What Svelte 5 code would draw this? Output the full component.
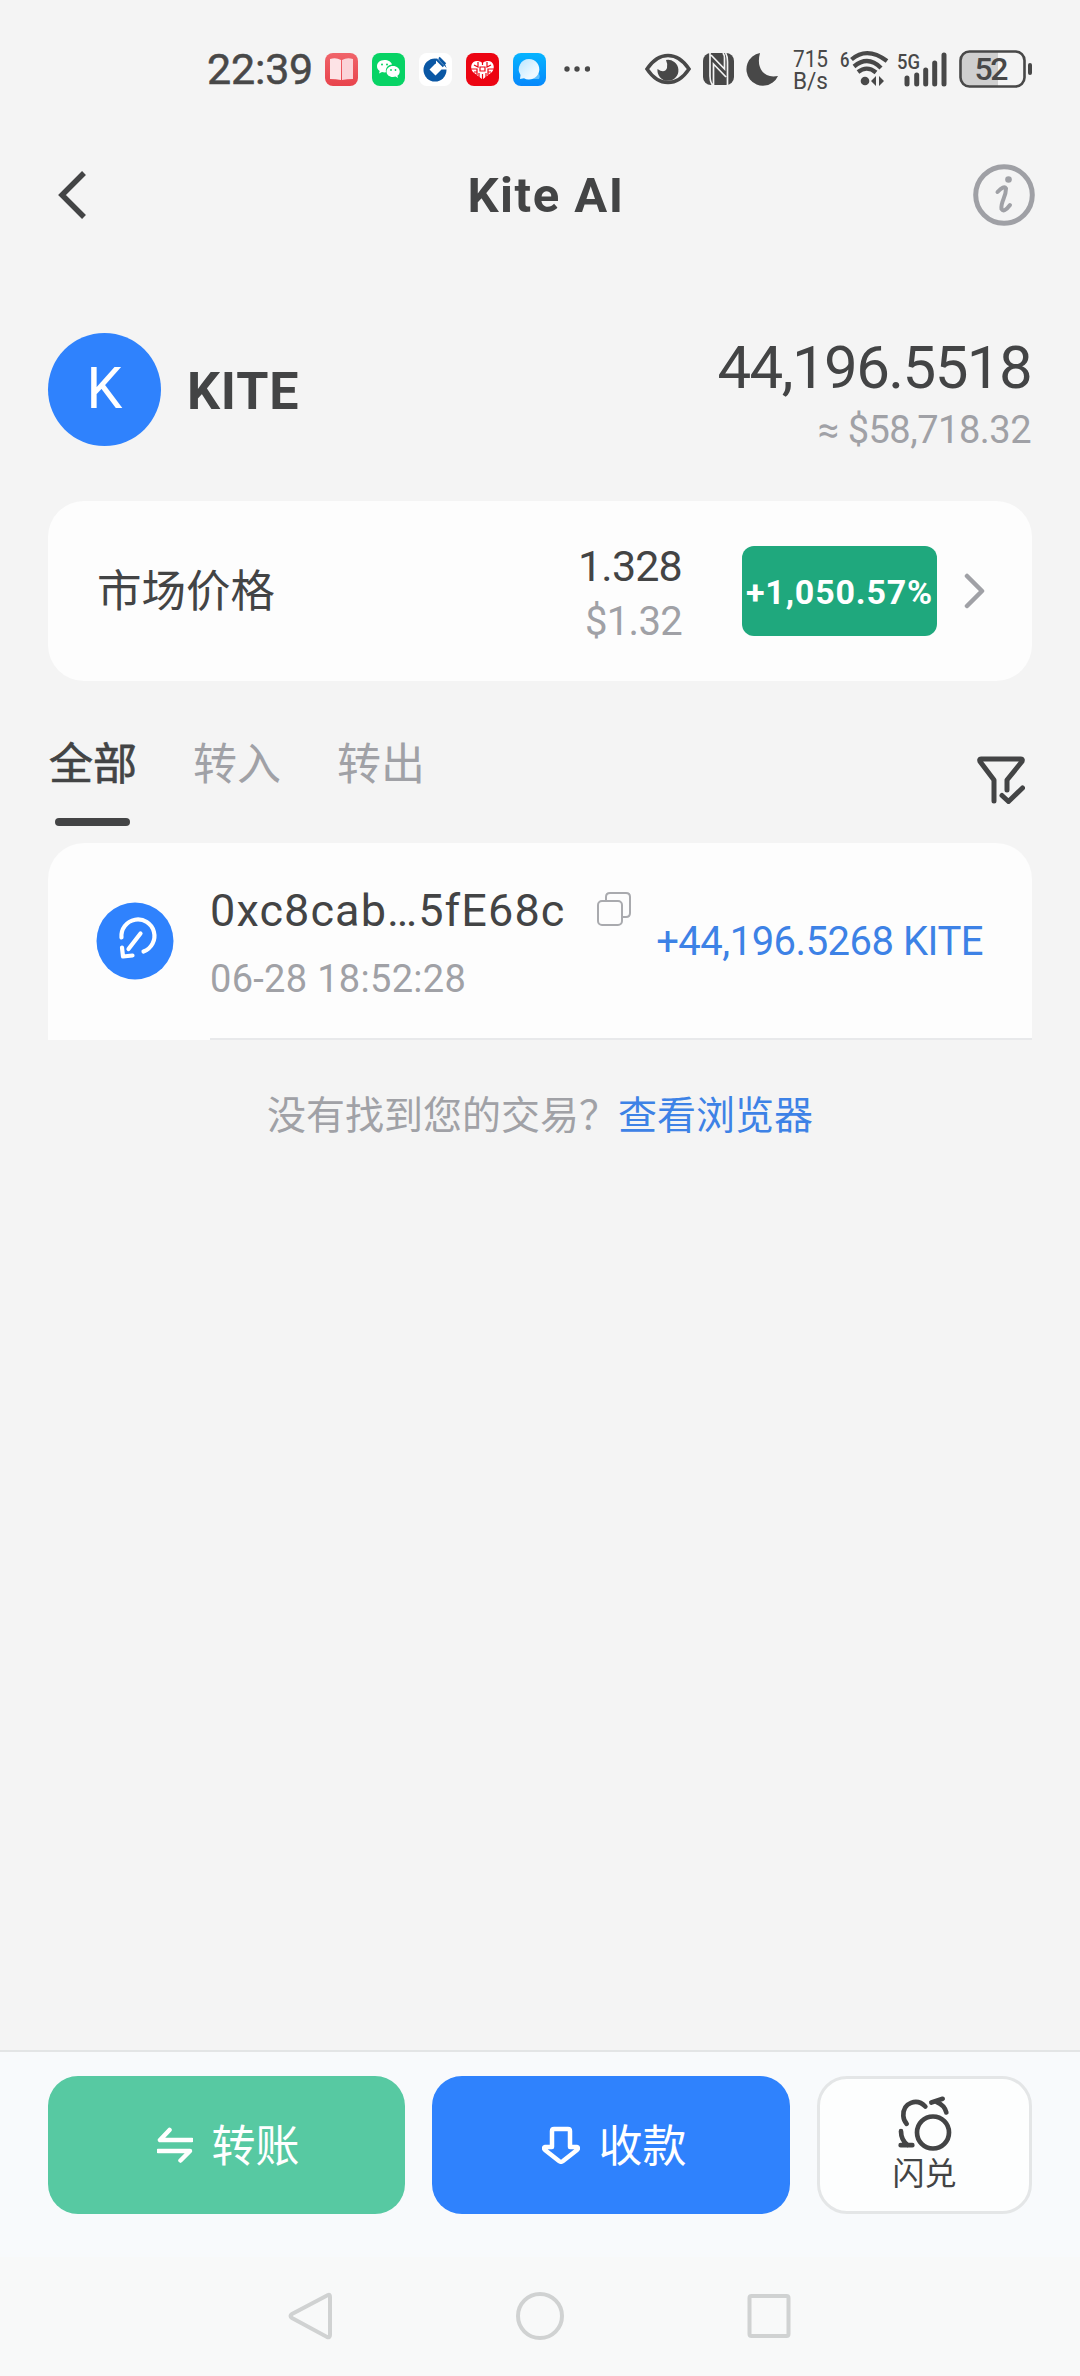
<script lang="ts">
    const token = {
        name: 'Kite AI',
        symbol: 'KITE',
        balance: '44,196.5518',
        value: '≈ $58,718.32',
        price: '1.328',
        priceUsd: '$1.32',
        change: '+1,050.57%',
    }

    const tabs = ['全部', '转入', '转出']
    let active = $state(0)

    const transactions = [
        { address: '0xc8cab…5fE68c', time: '06-28 18:52:28', amount: '+44,196.5268 KITE' },
    ]
</script>

<div class="page">
    <div class="status">
        <span class="clock">22:39</span>
        <div class="apps">
            <svg viewBox="0 0 33 33">
                <defs>
                    <linearGradient id="red" x2="0" y2="1">
                        <stop offset="0" stop-color="#f0646a" />
                        <stop offset="1" stop-color="#e8434c" />
                    </linearGradient>
                </defs>
                <rect width="33" height="33" rx="8" fill="url(#red)" />
                <path d="M5 6q6-2 11 1v20q-5-1-11-1z" fill="#fde3e6" />
                <path d="M28 6q-6-2-11 1v20q5-1 11-1z" fill="#fbd3d8" />
            </svg>
            <svg viewBox="0 0 33 33">
                <rect width="33" height="33" rx="8" fill="#07d365" />
                <path
                    d="M12.500 7C8 7 5 9.800 5 13.300c0 2 1 3.700 2.700 4.800L7 20.500l3-1.500q2 .6 4 .3c-1-5 3-7.800 6-7.800C19.300 8.800 16.400 7 12.500 7z"
                    fill="#fff"
                />
                <path
                    d="M21 13c-4 0-6.500 2.500-6.500 5.500S17 24 21 24q1.500 0 2.600-.4L26 25l-.6-2.200c1.500-1 2.300-2.500 2.300-4.300C27.700 15.500 25 13 21 13z"
                    fill="#fff"
                />
                <g fill="#07d365">
                    <circle cx="10" cy="11.500" r="1" />
                    <circle cx="15" cy="11.500" r="1" />
                    <circle cx="19" cy="17" r=".9" />
                    <circle cx="23.500" cy="17" r=".9" />
                </g>
            </svg>
            <svg viewBox="0 0 33 33">
                <rect width="33" height="33" rx="8" fill="#fff" />
                <circle cx="16" cy="17" r="11.500" fill="#0a57a4" />
                <path d="M16.500 10.500l6 6-6 6-6-6zM17 4l12 12.500h-7l-5-5z" fill="#fff" />
                <path d="M17 6l7.500 7.500M20 4.500l6.500 6.500" stroke="#0a57a4" stroke-width="2" />
            </svg>
            <svg viewBox="0 0 33 33">
                <rect width="33" height="33" rx="8" fill="#ec0412" />
                <path
                    d="M16.500 26.500L7 19c-4-5-1-12 5-11q3 .5 4.500 2Q18 8.500 21 8c6-1 9 6 5 11z"
                    fill="#fff"
                />
                <path
                    d="M16.500 9v3m0 9v6M8 12l4 2V9M5 16h6v6M25 12l-4 2V9M28 16h-6v6M14 14h5v4h-5zM13 20v5M20 20v5M8 19h3M22 19h3"
                    fill="none"
                    stroke="#ec0412"
                    stroke-width="1.200"
                />
            </svg>
            <svg viewBox="0 0 33 33">
                <defs>
                    <linearGradient id="blue" x2="0" y2="1">
                        <stop offset="0" stop-color="#06b4ff" />
                        <stop offset="1" stop-color="#0688fb" />
                    </linearGradient>
                    <linearGradient id="bubble" x2="1" y2="1">
                        <stop offset="0" stop-color="#b9e6ff" />
                        <stop offset=".7" stop-color="#eff9ff" />
                    </linearGradient>
                </defs>
                <rect width="33" height="33" rx="8" fill="url(#blue)" />
                <path d="M25 20a5 5 0 0 1 1 6h-6z" fill="#5fc0fc" />
                <path
                    d="M16 6A10.300 10.300 0 0 0 7.500 22L7 26l4-.7A10.300 10.300 0 1 0 16 6z"
                    fill="url(#bubble)"
                />
            </svg>
        </div>
        <svg class="dots" viewBox="0 0 26 6">
            <circle cx="3" cy="3" r="2.700" />
            <circle cx="13" cy="3" r="2.700" />
            <circle cx="23.500" cy="3" r="2.700" />
        </svg>

        <svg class="eye" viewBox="0 0 46 32">
            <path
                d="M2 16Q11 2.500 23 2.500T44 16Q35 29.500 23 29.500T2 16z"
                fill="none"
                stroke="#484848"
                stroke-width="3.500"
            />
            <path d="M21 7a10.500 10.500 0 1 1-8.500 9q7 5 9.500-1 1-3.500-1-8z" />
        </svg>
        <svg class="nfc" viewBox="0 0 31 32">
            <rect width="31" height="32" rx="8" />
            <path
                d="M7 0v23q0 6 2.500 9M8 2l13.500 14V5q0-3-1.500-5M10.500 32V11L23 24M24.500 32V9q0-6-2-9"
                fill="none"
                stroke="#f4f4f4"
                stroke-width="1.700"
            />
        </svg>
        <svg class="moon" viewBox="0 0 32 33">
            <path d="M14 0A16.500 16.500 0 1 0 32 23Q21 25 16 18T14 0z" />
        </svg>
        <svg class="speed" viewBox="0 0 38 44">
            <text x="0" y="20" font-size="24" textLength="35" lengthAdjust="spacingAndGlyphs">715</text>
            <text x="0" y="42" font-size="24" textLength="35" lengthAdjust="spacingAndGlyphs">B/s</text>
        </svg>
        <svg class="wifi" viewBox="0 0 50 38">
            <text
                x="1"
                y="17"
                font-size="20"
                font-weight="500"
                textLength="9.500"
                lengthAdjust="spacingAndGlyphs">6</text
            >
            <g fill="none" stroke="#484848" stroke-width="4.300">
                <path d="M12.500 9.500Q28-4 48 11" />
                <path d="M15 16.500Q29 5 42 18" />
                <path d="M19 22Q28 15 37 22.500" />
            </g>
            <circle cx="26" cy="31" r="4.300" />
            <path d="M32 31l5-5v10zM39 27v9M45 31l-5-5v10z" />
        </svg>
        <svg class="signal" viewBox="0 0 50 36">
            <text
                x="0"
                y="18"
                font-size="21"
                font-weight="500"
                textLength="23"
                lengthAdjust="spacingAndGlyphs">5G</text
            >
            <path
                d="M10 27v6M19.700 24v9M28.700 19v14M37.700 12v21M47 4v29"
                fill="none"
                stroke="#484848"
                stroke-width="5"
                stroke-linecap="round"
            />
        </svg>
        <svg class="battery" viewBox="0 0 74 38">
            <path d="M10 2h29v34H10q-8 0-8-8V10q0-8 8-8z" fill="#cfcfcf" />
            <rect
                x="1.500"
                y="1.500"
                width="64"
                height="35"
                rx="9"
                fill="none"
                stroke="#484848"
                stroke-width="2.600"
            />
            <rect x="69" y="13" width="4" height="12" rx="2" />
            <text x="15.500" y="30" font-size="32" font-weight="500" textLength="34">52</text>
        </svg>
    </div>

    <header>
        <svg class="back" viewBox="0 0 30 50">
            <path d="M26 3L4 25l22 22" />
        </svg>
        <h1>{token.name}</h1>
        <svg class="info" viewBox="0 0 62 62">
            <circle cx="31" cy="31" r="28.300" />
            <path class="stem" d="M24.500 28Q31 21 33 24.500 33 29 30.500 35T28.500 45Q31 49 37 41" />
            <circle class="tittle" cx="35.500" cy="15.500" r="3.300" />
        </svg>
    </header>

    <section class="asset">
        <div class="avatar">K</div>
        <h2>{token.symbol}</h2>
        <div class="totals">
            <div class="balance">{token.balance}</div>
            <div class="value">{token.value}</div>
        </div>
    </section>

    <section class="market">
        <span class="label">市场价格</span>
        <div class="prices">
            <div class="price">{token.price}</div>
            <div class="usd">{token.priceUsd}</div>
        </div>
        <span class="change">{token.change}</span>
        <svg class="more" viewBox="0 0 21 36">
            <path d="M3 3l15 15L3 33" />
        </svg>
    </section>

    <nav class="tabs">
        {#each tabs as tab, i}
            <button class:active={i === active} onclick={() => (active = i)}>{tab}</button>
        {/each}
        <svg class="filter" viewBox="0 0 48 48">
            <path
                d="M17 45V24L3 5.500Q2 3 4 3h40q2 0 1 2.500L30 24v10M25 39.500l6.500 6L45.500 32"
            />
        </svg>
    </nav>

    <section class="list">
        {#each transactions as tx}
            <div class="tx">
                <svg class="kind" viewBox="0 0 78 78">
                    <circle cx="39" cy="39" r="38.500" fill="#2f82fd" />
                    <path
                        d="M25.500 35.500A16.500 16.500 0 1 1 47.500 49.500M44.500 31.500L32.500 47M26 45.500l1 9 9.500-1"
                    />
                </svg>
                <div class="detail">
                    <div class="address">
                        <span>{tx.address}</span>
                        <svg class="copy" viewBox="0 0 34 34">
                            <path d="M9 9V5q0-4 4-4h16q4 0 4 4v16q0 4-4 4h-4" />
                            <rect x="1" y="9" width="24" height="24" rx="4" />
                        </svg>
                    </div>
                    <div class="time">{tx.time}</div>
                </div>
                <div class="amount">{tx.amount}</div>
            </div>
        {/each}
    </section>

    <p class="hint">没有找到您的交易？<span>查看浏览器</span></p>

    <footer>
        <button class="send">
            <svg viewBox="0 0 36 36">
                <path d="M12.500 3L3 13h32M1 24h32l-9.500 9.500" />
            </svg>
            <span>转账</span>
        </button>
        <button class="receive">
            <svg viewBox="0 0 38 38">
                <path d="M12 3h14q2 0 2 2v16h7q2 1 0 3L21 35q-2 1.500-4 0L3 24q-2-2 0-3h7V5q0-2 2-2z" />
            </svg>
            <span>收款</span>
        </button>
        <button class="swap">
            <svg viewBox="0 0 165 170">
                <circle cx="108" cy="112" r="48" />
                <path d="M85 34Q66 14 42 23T19 62q1 14 10 24" />
                <path d="M103 22l34-11M118 20q25 10 30 32" />
                <path d="M12 108q0 26 20 42M11 150h35" />
            </svg>
            闪兑
        </button>
    </footer>

    <div class="system">
        <svg viewBox="0 0 48 48"><path d="M41 3Q43 2 43 5v38q0 3-3 2L5 26q-3-2 0-4z" /></svg>
        <svg viewBox="0 0 48 48"><circle cx="24" cy="24" r="22" /></svg>
        <svg viewBox="0 0 48 48"><rect x="4.500" y="4" width="39" height="40" rx="2" /></svg>
    </div>
</div>

<style>
    :global(body) {
        margin: 0;
        background: #f4f4f4;
    }

    .page {
        display: flex;
        flex-direction: column;
        width: 1080px;
        height: 2376px;
        overflow: hidden;
        color: #434445;
        font-family: Roboto, "Noto Sans CJK SC", sans-serif;
        white-space: nowrap;
    }

    svg {
        display: block;
        flex: none;
    }

    button {
        margin: 0;
        padding: 0;
        border: 0;
        background: none;
        color: inherit;
        font: inherit;
    }

    .status {
        display: flex;
        align-items: center;
        box-sizing: border-box;
        height: 140px;
        padding: 0 0 2px 207px;
        fill: #484848;
        color: #484848;
    }

    .clock {
        width: 118px;
        font-size: 43px;
        letter-spacing: -0.2px;
        line-height: 50px;
        -webkit-text-stroke: 0.5px;
    }

    .apps {
        display: flex;
        gap: 14px;

        svg {
            width: 33px;
            height: 33px;
        }
    }

    .dots {
        width: 26px;
        height: 6px;
        margin-left: 18px;
    }

    .eye {
        width: 46px;
        height: 32px;
        margin-left: 55px;
    }

    .nfc {
        width: 31px;
        height: 32px;
        margin-left: 12px;
    }

    .moon {
        width: 32px;
        height: 33px;
        margin-left: 12px;
    }

    .speed {
        width: 38px;
        height: 44px;
        margin: 0 8px 0 15px;
    }

    .wifi {
        width: 50px;
        height: 38px;
    }

    .signal {
        width: 50px;
        height: 36px;
        margin-left: 8px;
    }

    .battery {
        width: 74px;
        height: 38px;
        margin-left: 12px;
    }

    header {
        display: flex;
        align-items: center;
        justify-content: space-between;
        height: 110px;
        padding: 0 45px 0 58px;
    }

    .back {
        width: 30px;
        height: 50px;
        margin-right: 31px;
        fill: none;
        stroke: #434445;
        stroke-width: 5.5;
    }

    h1 {
        margin: 0;
        font-size: 49px;
        font-weight: 700;
        letter-spacing: 1.5px;
    }

    .info {
        width: 62px;
        height: 62px;
        fill: none;
        stroke: #9fa0a5;
        stroke-width: 5;
        stroke-linecap: round;

        .stem {
            stroke-width: 4;
        }

        .tittle {
            fill: #9fa0a5;
            stroke: none;
        }
    }

    .asset {
        display: flex;
        align-items: center;
        height: 113px;
        padding: 0 49px 0 48px;
        margin: 83px 0 55px;

        h2 {
            margin: 4px 0 0 26px;
            font-size: 52px;
            font-weight: 700;
            letter-spacing: 0.8px;
        }
    }

    .avatar {
        width: 113px;
        height: 113px;
        border-radius: 50%;
        background: #2f82fd;
        color: #fff;
        font-size: 57px;
        line-height: 111px;
        text-align: center;
    }

    .totals {
        margin-left: auto;
        padding-top: 14px;
        text-align: right;
    }

    .balance {
        font-size: 60px;
        letter-spacing: -1.6px;
        line-height: 66px;
    }

    .value {
        color: #a0a1a6;
        font-size: 38px;
        letter-spacing: -0.5px;
        line-height: 58px;
    }

    .market {
        display: flex;
        align-items: center;
        box-sizing: border-box;
        height: 180px;
        margin: 0 48px;
        padding: 0 47px 0 49px;
        border-radius: 36px;
        background: #fdfdfd;
    }

    .label {
        padding-bottom: 8px;
        font-size: 44.5px;
    }

    .prices {
        margin-left: auto;
        padding-top: 5px;
        text-align: right;
    }

    .price {
        font-size: 43px;
        letter-spacing: -0.8px;
        line-height: 55px;
    }

    .usd {
        color: #a0a1a6;
        font-size: 40px;
        letter-spacing: -0.7px;
        line-height: 55px;
    }

    .change {
        width: 195px;
        height: 90px;
        margin: 0 27px 0 60px;
        border-radius: 12px;
        background: #1fa87d;
        color: #fff;
        font-size: 34px;
        font-weight: 700;
        letter-spacing: 0.8px;
        line-height: 92px;
        text-align: center;
    }

    .more {
        width: 21px;
        height: 36px;
        fill: none;
        stroke: #a0a1a6;
        stroke-width: 4.5;
        stroke-linecap: round;
        stroke-linejoin: round;
    }

    .tabs {
        display: flex;
        box-sizing: border-box;
        height: 162px;
        padding: 50px 55px 0 49px;
        gap: 56px;

        button {
            position: relative;
            display: flex;
            width: 88px;
            height: 95px;
            color: #a0a1a6;
            font-size: 44px;
            line-height: 69px;
        }

        .active {
            color: #434445;
            -webkit-text-stroke: 0.7px;
        }

        .active::after {
            content: "";
            position: absolute;
            bottom: 0;
            left: 6px;
            width: 75px;
            height: 8px;
            border-radius: 4px;
            background: #434445;
        }
    }

    .filter {
        width: 48px;
        height: 48px;
        margin: 25px 0 0 auto;
        fill: none;
        stroke: #434445;
        stroke-width: 5;
        stroke-linecap: round;
        stroke-linejoin: round;
    }

    .list {
        margin: 0 48px;
        border-radius: 36px 36px 0 0;
        background: linear-gradient(#e8e9eb, #e8e9eb) 100% 100% / 822px 2px no-repeat #fdfdfd;
    }

    .tx {
        display: flex;
        align-items: center;
        box-sizing: border-box;
        height: 197px;
        padding: 0 49px 0 48px;
    }

    .kind {
        width: 78px;
        height: 78px;
        margin-bottom: 2px;

        path {
            fill: none;
            stroke: #fff;
            stroke-width: 4.2;
            stroke-linecap: round;
            stroke-linejoin: round;
        }
    }

    .detail {
        margin-left: 36px;
        padding-top: 8px;
    }

    .address {
        display: flex;
        align-items: center;
        font-size: 45px;
        line-height: 66px;

        span {
            width: 387px;
            letter-spacing: 1.1px;
        }
    }

    .copy {
        width: 34px;
        height: 34px;
        margin-bottom: 3px;
        fill: none;
        stroke: #a9aaae;
        stroke-width: 2;
    }

    .time {
        color: #a0a1a6;
        font-size: 38px;
        letter-spacing: 0.3px;
        line-height: 70px;
    }

    .amount {
        margin-left: auto;
        color: #3d82e6;
        font-size: 40px;
        letter-spacing: -0.5px;
    }

    .hint {
        margin: 46px 0 0;
        color: #a0a1a6;
        font-size: 39px;
        line-height: 60px;
        text-align: center;

        span {
            color: #3d82e6;
        }
    }

    footer {
        display: flex;
        gap: 27px;
        box-sizing: border-box;
        height: 207px;
        margin-top: auto;
        padding: 24px 48px 0;
        border-top: 2px solid #e3e5e6;
        background: #f8fafc;

        button {
            display: flex;
            align-items: center;
            justify-content: center;
            box-sizing: border-box;
            width: 357px;
            height: 138px;
            border-radius: 30px;
            color: #fff;
            font-size: 44px;
        }

        span {
            padding-bottom: 4px;
        }

        svg {
            fill: none;
            stroke: #fff;
            stroke-width: 4.5;
            stroke-linecap: round;
            stroke-linejoin: round;
        }
    }

    .send {
        gap: 19px;

        svg {
            width: 36px;
            height: 36px;
        }
    }

    footer .send {
        padding-left: 3px;
        background: #57c9a2;
    }

    .receive {
        gap: 19px;

        svg {
            width: 38px;
            height: 38px;
        }
    }

    footer .receive {
        width: 358px;
        padding-left: 6px;
        background: #2f82fd;
    }

    footer .swap {
        flex-direction: column;
        width: 215px;
        border: 3px solid #e4e6e7;
        background: #fdfefe;
        color: #434445;
        font-size: 32px;
        line-height: 44px;

        svg {
            width: 55px;
            height: 57px;
            stroke: #434445;
            stroke-width: 14;
        }
    }

    .system {
        display: flex;
        align-items: center;
        justify-content: center;
        gap: 181px;
        height: 119px;
        background: #f8f9f9;

        svg {
            width: 48px;
            height: 48px;
            margin-bottom: 1px;
            fill: none;
            stroke: #d0d2d2;
            stroke-width: 4;
        }
    }
</style>
